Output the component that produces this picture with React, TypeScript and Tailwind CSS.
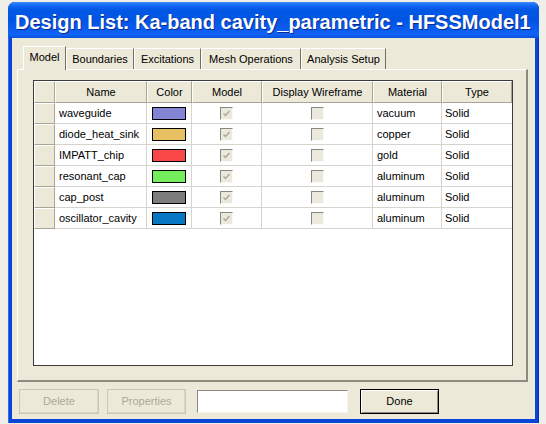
import React from 'react'

const parts = [
  { name: 'waveguide', color: '#8484d4', material: 'vacuum' },
  { name: 'diode_heat_sink', color: '#e8c064', material: 'copper' },
  { name: 'IMPATT_chip', color: '#f84848', material: 'gold' },
  { name: 'resonant_cap', color: '#74ee5c', material: 'aluminum' },
  { name: 'cap_post', color: '#7c7c7c', material: 'aluminum' },
  { name: 'oscillator_cavity', color: '#0878c4', material: 'aluminum' },
]

const tabs = [
  { label: 'Model', w: 'w-[43px]' },
  { label: 'Boundaries', w: 'w-[68px]' },
  { label: 'Excitations', w: 'w-[67px]' },
  { label: 'Mesh Operations', w: 'w-[100px]' },
  { label: 'Analysis Setup', w: 'w-[85px]' },
]
const headers = ['Name', 'Color', 'Model', 'Display Wireframe', 'Material', 'Type']

function CheckBox({ checked }: { checked?: boolean }) {
  return (
    <div className="flex h-[13px] w-[13px] items-center justify-center border-t border-l border-t-[#8a877c] border-l-[#8a877c] border-r border-b border-r-[#fbfaf6] border-b-[#fbfaf6] bg-[#ebe9dd]">
      {checked && (
        <svg width="9" height="9" viewBox="0 0 9 9">
          <path d="M1.5 4.5 L3.5 6.5 L7.5 2" fill="none" stroke="#a9a79c" strokeWidth="1.4" />
        </svg>
      )}
    </div>
  )
}

export default function App() {
  return (
    <div className="h-[424px] w-[546px] overflow-hidden bg-[#efeee9] pt-[2px] pl-[8px] font-['Liberation_Sans',Arial,sans-serif] text-[11px] text-black">
      <div className="flex h-[421px] w-[531px] flex-col rounded-t-[7px] bg-[#0a45d6] px-[4px] pb-[4px] shadow-[inset_1px_0_#2e6ff0,inset_-1px_0_#0232b8]">
        {/* title bar */}
        <div className="-mx-[4px] flex h-[36px] shrink-0 items-center rounded-t-[7px] bg-[linear-gradient(to_bottom,#3c8ffe_0%,#1a6cf6_8%,#0458e6_20%,#0054e3_50%,#0a5cf0_75%,#1063f4_90%,#0a4fd8_100%)] pt-[3px] pl-[7px]">
          <span className="whitespace-nowrap font-['Liberation_Sans',Arial,sans-serif] text-[20px] font-bold text-white [text-shadow:1px_1px_#0b2a8c]">
            Design List: Ka-band cavity_parametric - HFSSModel1
          </span>
        </div>

        {/* body */}
        <div className="flex flex-1 flex-col bg-[#ece9d8]">
          <div className="mt-[9px] ml-[11px] flex h-[22px] items-end">
            {tabs.map((t, i) => (
              <div
                key={t.label}
                className={
                  i === 0
                    ? `relative z-10 -mb-px flex h-[24px] ${t.w} items-center justify-center border-t border-l border-t-white border-l-white border-r border-r-[#716f64] bg-[#ece9d8] pb-[2px]`
                    : `flex h-[21px] ${t.w} items-center justify-center border-t border-l border-t-white border-l-white border-r border-r-[#716f64] bg-[#ece9d8]`
                }
              >
                {t.label}
              </div>
            ))}
          </div>

          {/* tab page */}
          <div className="ml-[5px] flex h-[313px] w-[511px] flex-col border-t border-l border-t-white border-l-white border-r-2 border-b-2 border-r-[#8d8b80] border-b-[#8d8b80] pt-[10px] pl-[15px]">
            <div className="flex h-[286px] w-[480px] flex-col border border-[#3c3c3c] bg-white">
              <div className="grid h-[22px] grid-cols-[21px_92px_45px_70px_111px_69px_70px]">
                <div className="border-t border-l border-t-white border-l-white border-r border-b border-r-[#a7a596] border-b-[#a7a596] bg-[#ece9d8]" />
                {headers.map((h) => (
                  <div
                    key={h}
                    className="flex items-center justify-center border-t border-l border-t-white border-l-white border-r border-b border-r-[#a7a596] border-b-[#a7a596] bg-[#ece9d8]"
                  >
                    {h}
                  </div>
                ))}
              </div>
              {parts.map((p) => (
                <div key={p.name} className="grid h-[21px] grid-cols-[21px_92px_45px_70px_111px_69px_70px]">
                  <div className="border-t border-l border-t-white border-l-white border-r border-b border-r-[#a7a596] border-b-[#a7a596] bg-[#ece9d8]" />
                  <div className="flex items-center border-r border-b border-[#d6d4cc] pl-[4px]">{p.name}</div>
                  <div className="flex items-center justify-center border-r border-b border-[#d6d4cc]">
                    <div className="h-[13px] w-[34px] border border-black" style={{ backgroundColor: p.color }} />
                  </div>
                  <div className="flex items-center justify-center border-r border-b border-[#d6d4cc]">
                    <CheckBox checked />
                  </div>
                  <div className="flex items-center justify-center border-r border-b border-[#d6d4cc]">
                    <CheckBox />
                  </div>
                  <div className="flex items-center border-r border-b border-[#d6d4cc] pl-[4px]">{p.material}</div>
                  <div className="flex items-center border-b border-[#d6d4cc] pl-[3px]">Solid</div>
                </div>
              ))}
            </div>
          </div>

          {/* buttons */}
          <div className="mt-[7px] ml-[7px] flex items-center">
            <button className="h-[25px] w-[80px] border border-[#c9c7ba] bg-[#ece9d8] text-[#aca899] shadow-[inset_-1px_-1px_#d8d5c8]">
              Delete
            </button>
            <button className="ml-[8px] h-[25px] w-[79px] border border-[#c9c7ba] bg-[#ece9d8] text-[#aca899] shadow-[inset_-1px_-1px_#d8d5c8]">
              Properties
            </button>
            <div className="ml-[11px] h-[23px] w-[151px] border-t border-l border-t-[#8a887e] border-l-[#8a887e] border-r border-b border-r-[#f4f3ee] border-b-[#f4f3ee] bg-white" />
            <button className="ml-[12px] h-[25px] w-[79px] border border-black bg-[#ece9d8] shadow-[inset_1px_1px_white,inset_-1px_-1px_#8d8b80]">
              Done
            </button>
          </div>
        </div>
      </div>
    </div>
  )
}
